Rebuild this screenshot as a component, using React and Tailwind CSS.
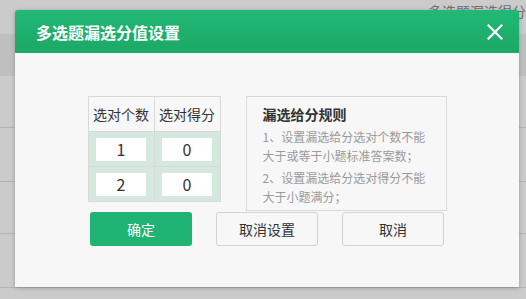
import React from 'react';

const font = { fontFamily: '"Noto Sans CJK SC", "Microsoft YaHei", sans-serif' };

const rows = [
  { count: '1', score: '0' },
  { count: '2', score: '0' },
];

const App = () => {
  return (
    <div className="relative w-[526px] h-[299px] overflow-hidden bg-[#cbcbcb]" style={font}>
      {/* page behind the overlay */}
      <div className="flex flex-col">
        <div className="h-[34px] flex justify-end">
          <span className="mt-[2px] text-[14px] leading-[18px] text-[#6f6f6f] whitespace-nowrap">多选题漏选得分</span>
        </div>
        <div className="h-[42px] bg-[#bfbfbf]"></div>
        <div className="h-[52px] border-b border-[#b4b4b4]"></div>
        <div className="h-[54px] border-b border-[#b4b4b4]"></div>
        <div className="h-[52px] border-b border-[#b4b4b4]"></div>
        <div className="h-[54px] border-b border-[#b4b4b4]"></div>
      </div>

      {/* dialog */}
      <div className="absolute left-[15px] top-[10px] w-[504px] h-[277px] flex flex-col rounded-t-[3px] overflow-hidden shadow-[0_1px_4px_rgba(0,0,0,0.25)]">
        <div className="h-[43px] flex items-center justify-between pl-[21px] pr-[16px] bg-gradient-to-b from-[#22b876] to-[#1ca866]">
          <span className="text-[16px] font-bold text-white leading-none">多选题漏选分值设置</span>
          <svg width="16" height="16" viewBox="0 0 16 16" className="text-white">
            <path d="M1.5 1.5 L14.5 14.5 M14.5 1.5 L1.5 14.5" stroke="currentColor" strokeWidth="2.2" strokeLinecap="square" />
          </svg>
        </div>

        <div className="flex-1 bg-[#f7f7f7] flex flex-col items-center pt-[43px]">
          <div className="flex items-start gap-[25px]">
            <table className="border-collapse border border-[#d9d9d9] text-[#333]">
              <thead>
                <tr className="h-[35px] bg-[#f7f7f7]">
                  <th className="w-[66px] border border-[#d9d9d9] font-normal text-[14px]">选对个数</th>
                  <th className="w-[66px] border border-[#d9d9d9] font-normal text-[14px]">选对得分</th>
                </tr>
              </thead>
              <tbody>
                {rows.map((r, i) => (
                  <tr key={i} className="h-[35px] bg-[#d4e8de]">
                    <td className="border border-[#d9d9d9] text-center align-middle">
                      <input
                        defaultValue={r.count}
                        className="w-[50px] h-[23px] bg-white text-center text-[16px] text-[#333] outline-none"
                      />
                    </td>
                    <td className="border border-[#d9d9d9] text-center align-middle">
                      <input
                        defaultValue={r.score}
                        className="w-[50px] h-[23px] bg-white text-center text-[16px] text-[#333] outline-none"
                      />
                    </td>
                  </tr>
                ))}
              </tbody>
            </table>

            <div className="w-[201px] h-[115px] border border-[#d9d9d9] bg-[#f7f7f7] pl-[16px] pr-[10px] pt-[7px]">
              <p className="text-[14px] font-bold text-[#333] leading-[20px] mb-[3px]">漏选给分规则</p>
              <p className="text-[12px] text-[#9a9a9a] leading-[19px] mb-[3px]">1、设置漏选给分选对个数不能大于或等于小题标准答案数；</p>
              <p className="text-[12px] text-[#9a9a9a] leading-[19px]">2、设置漏选给分选对得分不能大于小题满分；</p>
            </div>
          </div>

          <div className="flex gap-[24px] mt-[1px] text-[14px]">
            <button className="w-[102px] h-[34px] rounded-[3px] bg-[#1fb374] text-white">确定</button>
            <button className="w-[102px] h-[34px] rounded-[3px] border border-[#d2d2d2] bg-[#f7f7f7] text-[#333]">取消设置</button>
            <button className="w-[102px] h-[34px] rounded-[3px] border border-[#d2d2d2] bg-[#f7f7f7] text-[#333]">取消</button>
          </div>
        </div>
      </div>
    </div>
  );
};

export default App;
